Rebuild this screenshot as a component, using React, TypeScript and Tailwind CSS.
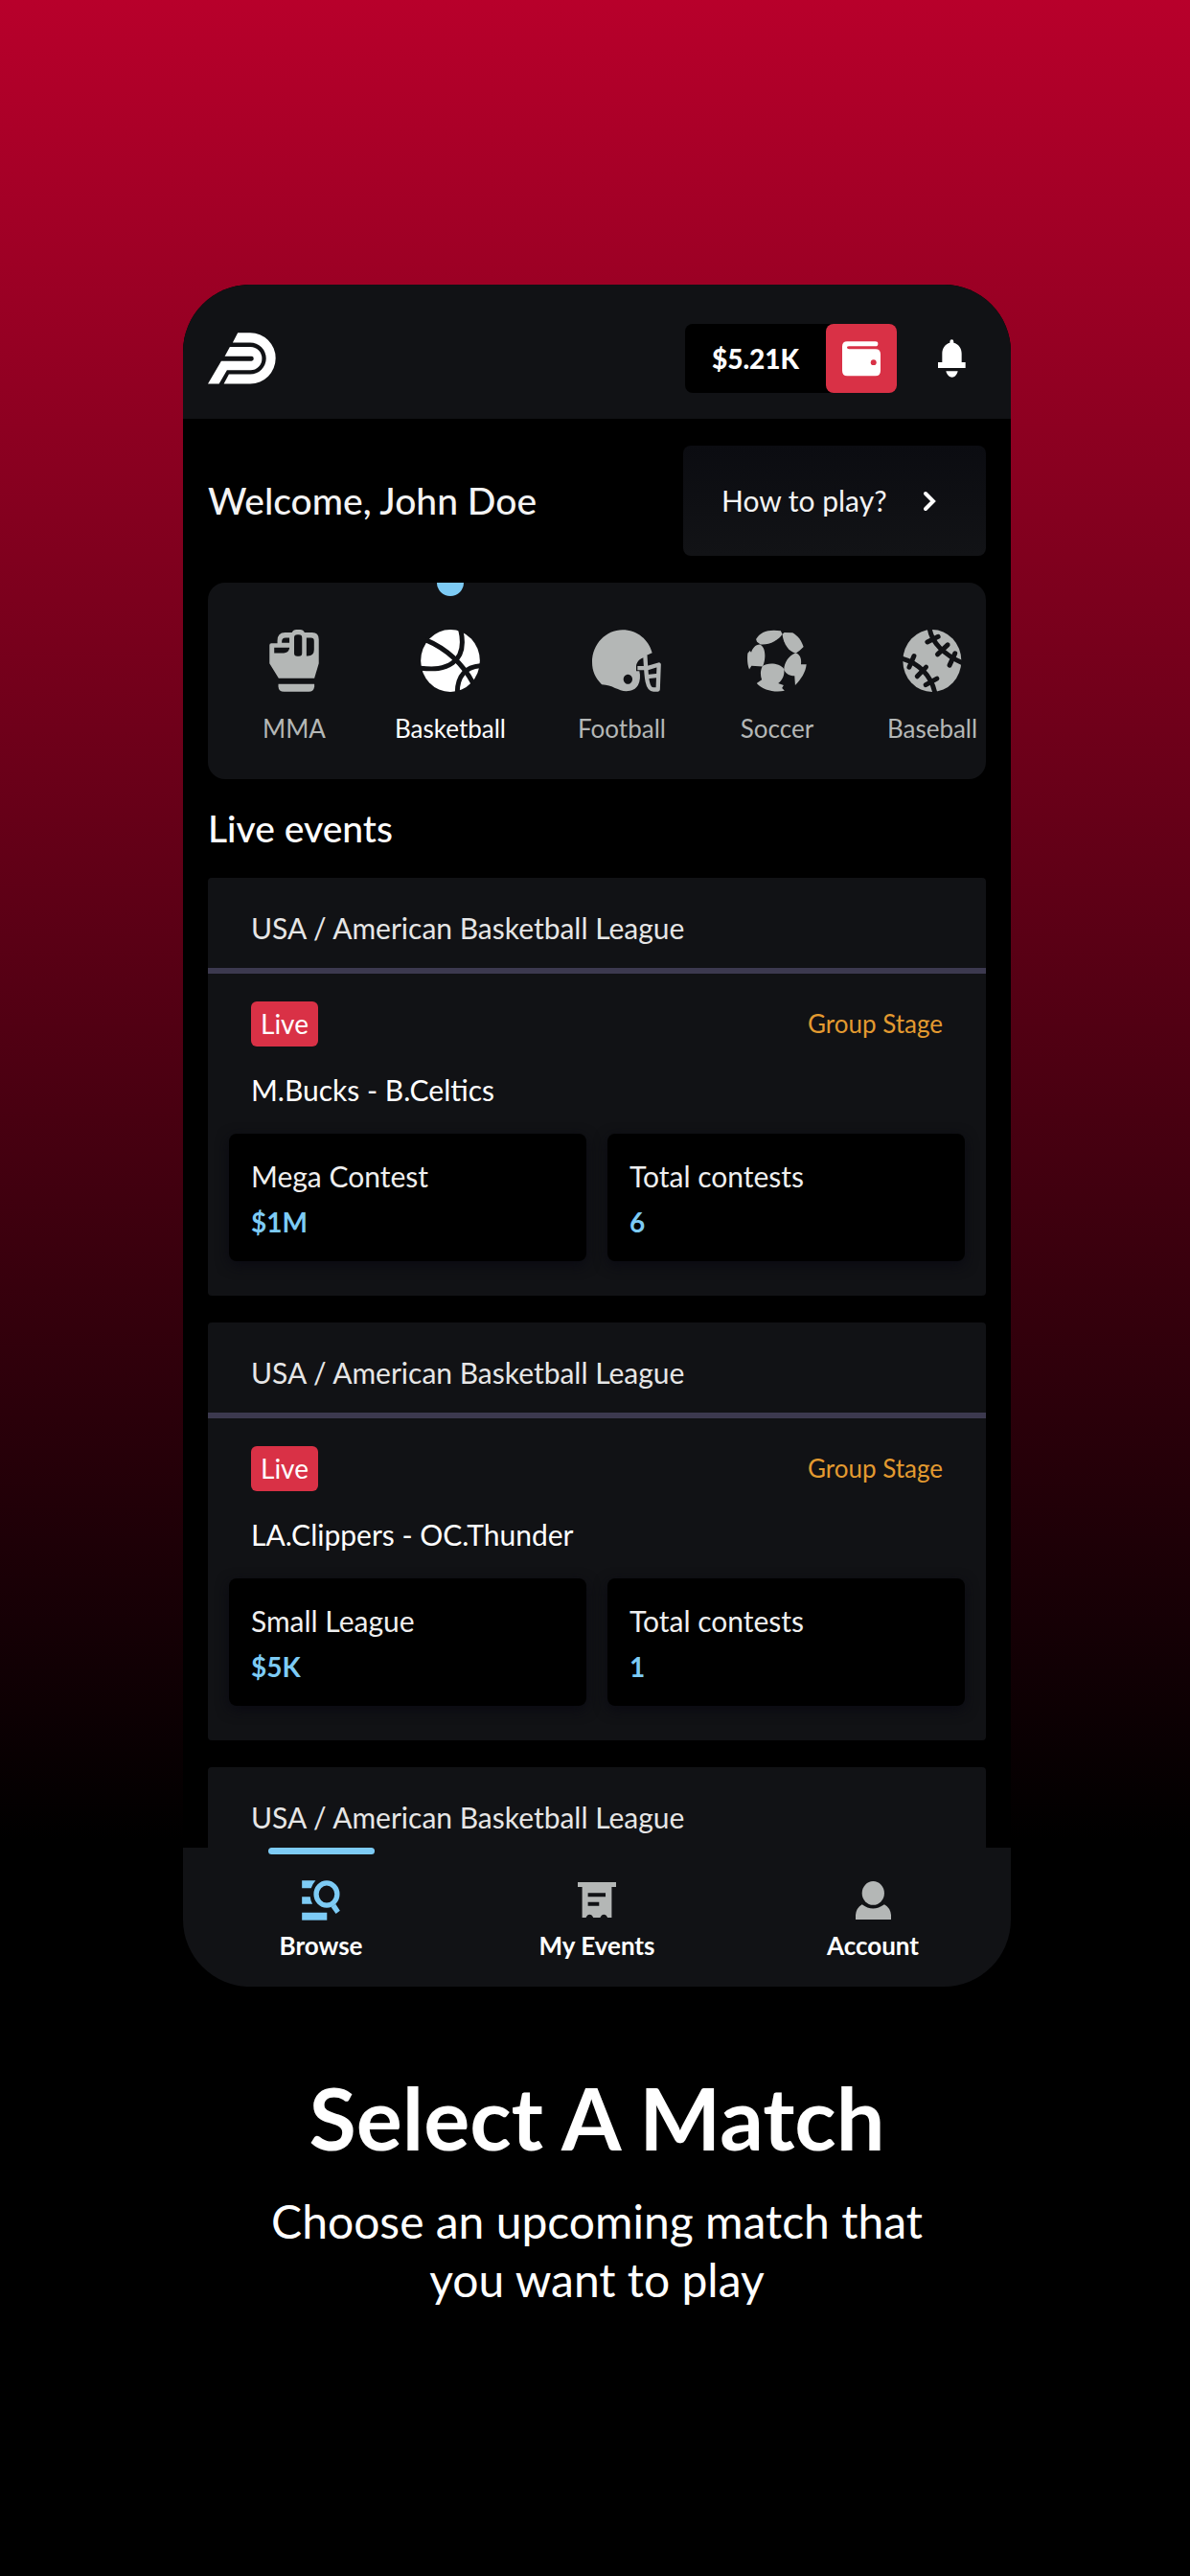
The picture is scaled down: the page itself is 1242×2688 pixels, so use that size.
import React from "react";

const PANEL = "#111215";

function Logo() {
  return (
    <svg viewBox="112 201 214 162" className="h-[54px] w-[71px] fill-white" role="img" aria-label="Home">
      <path d="M190 232 L206 201 H245 A80 80.5 0 0 1 245 362 H162 L178 332 H245 A50 50 0 0 0 245 232 Z" />
      <path d="M165 275 L181 246 H246 A36 36.5 0 0 1 246 319 H172 L147 362 H112 L154 290 H249 A7 7.5 0 0 0 249 275 Z" />
    </svg>
  );
}

function WalletIcon() {
  return (
    <svg viewBox="600 200 121 110" className="h-[37px] w-10">
      <path
        fill="#fff"
        d="M616 200 H705 q8 0 8 7 q0 8 -8 8 H622 q-7 0 -7 4 q0 5 7 5 H705 q16 0 16 16 V292 q0 17 -16 17 H616 q-16 0 -16 -17 V216 q0 -16 16 -16z"
      />
      <circle cx="699" cy="266" r="9" fill="#d93146" />
    </svg>
  );
}

function BellIcon() {
  return (
    <svg viewBox="899 193 87 118" className="h-10 w-[29px] fill-white">
      <path d="M936 200 q0 -7 6 -7 q6 0 6 7 v3 c15 4 25 16 25 34 v27 h12 v18 h-86 v-18 h13 v-27 c0 -18 10 -30 24 -34z" />
      <path d="M924 292 h37 c-3 12 -10 19 -18 19 s-16 -7 -19 -19z" />
    </svg>
  );
}

function MmaIcon() {
  return (
    <svg viewBox="237 201 156 197" className="h-[65px] w-[52px] fill-current">
      <path
        fillRule="evenodd"
        d="M237 250 q0 -6 6 -6 H262 V236 q0 -26 24 -26 H308 q4 -9 14 -9 h12 q10 0 14 9 h24 q21 0 21 22 V308 L379 355 H266 L237 308Z
           M276 243 v-4 q0 -12 12 -12 h12 v16z
           M252 258 h48 v3 q-4 14 -18 14 h-30z
           M325 217 h5 q10 0 10 10 v48 q0 10 -10 10 h-5 q-10 0 -10 -10 v-48 q0 -10 10 -10z
           M354 227 h14 q10 0 10 10 v28 q0 19 -20 19 h-4z"
      />
      <path d="M265 373 h114 v8 q-2 16 -18 16 h-78 q-17 0 -18 -16z" />
    </svg>
  );
}

function BasketballIcon() {
  return (
    <svg viewBox="717 201 186 196" className="h-[65px] w-[62px]">
      <ellipse cx="810" cy="299" rx="93" ry="98" fill="currentColor" />
      <g fill="none" stroke={PANEL} strokeWidth="15">
        <path d="M732 233 C800 262 850 310 882 370" />
        <path d="M842 200 C853 245 850 282 817 306 C790 325 760 327 712 322" />
        <path d="M906 315 C860 318 832 345 832 400" />
      </g>
    </svg>
  );
}

function FootballIcon() {
  return (
    <svg viewBox="84 201 246 194" className="h-[65px] w-[82px]">
      <path
        fill="currentColor"
        fillRule="evenodd"
        d="M144 372 C124 352 114 330 114 302 C114 245 158 201 209 201 C255 201 292 232 302 273 L285 281 L273 289 C262 292 254 302 252 314 V330 H262 C266 345 264 362 258 374 C251 387 238 393 221 393 C196 393 178 373 144 372Z
           M226 341 a14 15 0 1 0 0.1 0z"
      />
      <g fill="none" stroke="currentColor" strokeWidth="13" strokeLinejoin="round">
        <path d="M256 321 H287 L323 310 L320 388 H306 C285 388 284 350 280 280" />
        <path d="M286 348 L322 344" />
      </g>
    </svg>
  );
}

function SoccerIcon() {
  return (
    <svg viewBox="601 203 185 194" className="h-[65px] w-[62px] fill-current">
      <path d="M628 233 C640 210 668 201 705 207 L710 217 C700 235 668 252 642 249 L631 241Z" />
      <path d="M710 217 L716 212 L742 213 C758 222 770 238 776 257 L764 268 L752 277 C730 270 714 250 710 217Z" />
      <path d="M602 277 L609 269 L613 274 C617 262 625 249 640 249 C658 256 660 292 649 318 L614 316 L607 327 C601 312 600 294 602 277Z" />
      <path d="M648 317 C663 305 700 306 715 325 C718 345 710 360 697 370 L714 376 L709 385 L717 393 C688 400 650 392 630 370 L646 359 C641 345 641 330 648 317Z" />
      <path d="M750 276 C763 277 771 292 768 311 L785 311 C783 335 768 358 750 376 L748 347 C735 347 722 342 715 328 C716 305 730 284 750 276Z" />
    </svg>
  );
}

function BaseballIcon() {
  return (
    <svg viewBox="1086 201 185 196" className="h-[65px] w-[62px]">
      <ellipse cx="1178" cy="299" rx="92" ry="98" fill="currentColor" />
      <g fill="none" stroke={PANEL} strokeWidth="15" strokeLinecap="round">
        <path d="M1170 196 C1175 240 1215 280 1276 307" />
        <path d="M1163 240 L1197 223" />
        <path d="M1195 279 L1227 249" />
        <path d="M1250 276 L1233 313" />
        <path d="M1080 291 C1135 305 1175 345 1187 400" />
        <path d="M1121 284 L1106 319" />
        <path d="M1159 319 L1131 348" />
        <path d="M1193 355 L1158 375" />
      </g>
    </svg>
  );
}

function BrowseIcon() {
  return (
    <svg viewBox="404 545 120 127" className="h-[42px] w-10">
      <g fill="#7dcbf5">
        <path d="M404 546 H447 Q438 556 433 570 H404z" />
        <path d="M404 597 h26 q1 14 7 23 h-33z" />
        <path d="M404 647 h79 v24 h-79z" />
        <path d="M496 630 L510 620 L524 641 L511 651z" />
      </g>
      <ellipse cx="482" cy="589" rx="33" ry="35" fill="none" stroke="#7dcbf5" strokeWidth="16" />
    </svg>
  );
}

function ReceiptIcon() {
  return (
    <svg viewBox="231 552 113 111" preserveAspectRatio="none" className="h-[37px] w-10 fill-[#b4b7b6]">
      <path
        fillRule="evenodd"
        d="M231 552 H344 V567 H331 V663 H319 q-4 -10 -11 -10 q-7 0 -11 10 h-20 q-4 -10 -11 -10 q-7 0 -11 10 h-11 V567 h-13z
           M261 586 h52 v12 h-52z M261 614 h33 v12 h-33z"
      />
    </svg>
  );
}

function AccountIcon() {
  return (
    <svg viewBox="1041 550 105 119" preserveAspectRatio="none" className="h-10 w-[37px] fill-[#b4b7b6]">
      <ellipse cx="1093" cy="587" rx="33" ry="37" />
      <path d="M1041 669 V655 q2 -23 19 -33 q32 25 66 0 q18 10 20 33 v14z" />
    </svg>
  );
}

const sports = [
  { name: "MMA", icon: <MmaIcon />, width: "w-[58px]" },
  { name: "Basketball", icon: <BasketballIcon />, width: "w-[112px]", active: true },
  { name: "Football", icon: <FootballIcon />, width: "w-[90px]" },
  { name: "Soccer", icon: <SoccerIcon />, width: "w-[78px]" },
  { name: "Baseball", icon: <BaseballIcon />, width: "w-[90px]" },
];

const events = [
  { match: "M.Bucks - B.Celtics", contest: "Mega Contest", prize: "$1M", total: "6" },
  { match: "LA.Clippers - OC.Thunder", contest: "Small League", prize: "$5K", total: "1" },
];

function LeagueHeader() {
  return (
    <h3 className="border-b-[6px] border-[#3c394f] px-[45px] pt-8 pb-[22px] text-[30px] leading-10 text-[#e6e6e6]">
      USA / American Basketball League
    </h3>
  );
}

function Stat({ label, value }: { label: string; value: string }) {
  return (
    <div className="rounded-lg bg-black px-[23px] pt-5 pb-[17px] text-[30px] leading-[48px] shadow-[0_4px_14px_#0a0a12]">
      <dt className="text-[#efefef]">{label}</dt>
      <dd className="text-[28px] font-bold text-[#7dcbf5]">{value}</dd>
    </div>
  );
}

function EventCard({ match, contest, prize, total }: (typeof events)[number]) {
  return (
    <article className="rounded bg-[#111215]">
      <LeagueHeader />
      <div className="px-[22px] pt-[29px] pb-9">
        <div className="flex items-center justify-between px-[23px]">
          <span className="rounded-md bg-[#d93146] px-[10px] text-[28px] leading-[47px]">Live</span>
          <span className="text-[26px] text-[#e39a30]">Group Stage</span>
        </div>
        <h4 className="my-7 px-[23px] text-[30px] leading-[35px]">{match}</h4>
        <dl className="grid grid-cols-2 gap-[22px]">
          <Stat label={contest} value={prize} />
          <Stat label="Total contests" value={total} />
        </dl>
      </div>
    </article>
  );
}

function NavLink({ label, icon, active }: { label: string; icon: React.ReactNode; active?: boolean }) {
  return (
    <a href="#" className="relative flex flex-col items-center pt-[33px] text-[26px] font-bold">
      {active && <span className="absolute top-0 h-[7px] w-[111px] rounded-full bg-[#7dcbf5]" />}
      <span className="flex h-[43px] items-center">{icon}</span>
      <span className="mt-2 leading-9">{label}</span>
    </a>
  );
}

export default function App() {
  return (
    <div className="min-h-screen bg-black bg-[linear-gradient(#b8002b_0px,#000_1920px)] pt-[297px] pr-[187px] pb-10 pl-[191px] font-['Lato',sans-serif] text-white">
      <div className="overflow-hidden rounded-[70px] bg-black">
        <header className="flex items-center justify-between bg-[#111215] pt-[41px] pr-[47px] pb-[27px] pl-[26px]">
          <a href="#">
            <Logo />
          </a>
          <div className="flex items-center gap-[43px]">
            <div className="flex items-center rounded-lg bg-black">
              <span className="px-7 text-[28px] font-black">$5.21K</span>
              <button aria-label="Wallet" className="flex h-[72px] w-[74px] items-center justify-center rounded-lg bg-[#d93146]">
                <WalletIcon />
              </button>
            </div>
            <button aria-label="Notifications">
              <BellIcon />
            </button>
          </div>
        </header>

        <main className="px-[26px] pt-7">
          <div className="flex items-center justify-between">
            <h1 className="text-[39px] font-medium text-[#f4f4f4]">Welcome, John Doe</h1>
            <button className="flex h-[115px] w-[316px] items-center justify-between rounded-lg bg-linear-to-b from-[#0b0c11] to-[#121316] pr-[53px] pl-10 text-[30px] text-[#f4f4f4]">
              How to play?
              <svg viewBox="0 0 12 20" className="h-5 w-3 overflow-visible" fill="none" stroke="#fff" strokeWidth="4" strokeLinecap="round">
                <path d="M2 2 L10 10 L2 18" />
              </svg>
            </button>
          </div>

          <nav className="mt-7 flex gap-[78px] overflow-hidden rounded-[18px] bg-[#111215] pl-[61px]">
            {sports.map((s) => (
              <button
                key={s.name}
                className={`${s.width} ${s.active ? "text-white" : "text-[#b4b7b6]"} relative flex shrink-0 flex-col items-center pt-[49px] pb-[35px] text-[26px] whitespace-nowrap`}
              >
                {s.active && <span className="absolute -top-3.5 size-7 rounded-full bg-[#7dcbf5]" />}
                {s.icon}
                <span className="mt-5 leading-9">{s.name}</span>
              </button>
            ))}
          </nav>

          <h2 className="my-7 text-[39px] leading-[47px] font-medium">Live events</h2>

          <div className="flex flex-col gap-7">
            {events.map((e) => (
              <EventCard key={e.match} {...e} />
            ))}
            <article className="rounded bg-[#111215]">
              <LeagueHeader />
            </article>
          </div>
        </main>

        <nav className="relative -mt-4 grid grid-cols-3 bg-[#111215] pb-[25px]">
          <NavLink label="Browse" icon={<BrowseIcon />} active />
          <NavLink label="My Events" icon={<ReceiptIcon />} />
          <NavLink label="Account" icon={<AccountIcon />} />
        </nav>
      </div>

      <section className="mt-[86px] text-center">
        <h2 className="text-[90px] leading-[100px] font-bold">Select A Match</h2>
        <p className="mt-7 text-[48px] leading-[61px]">
          Choose an upcoming match that
          <br />
          you want to play
        </p>
      </section>
    </div>
  );
}
